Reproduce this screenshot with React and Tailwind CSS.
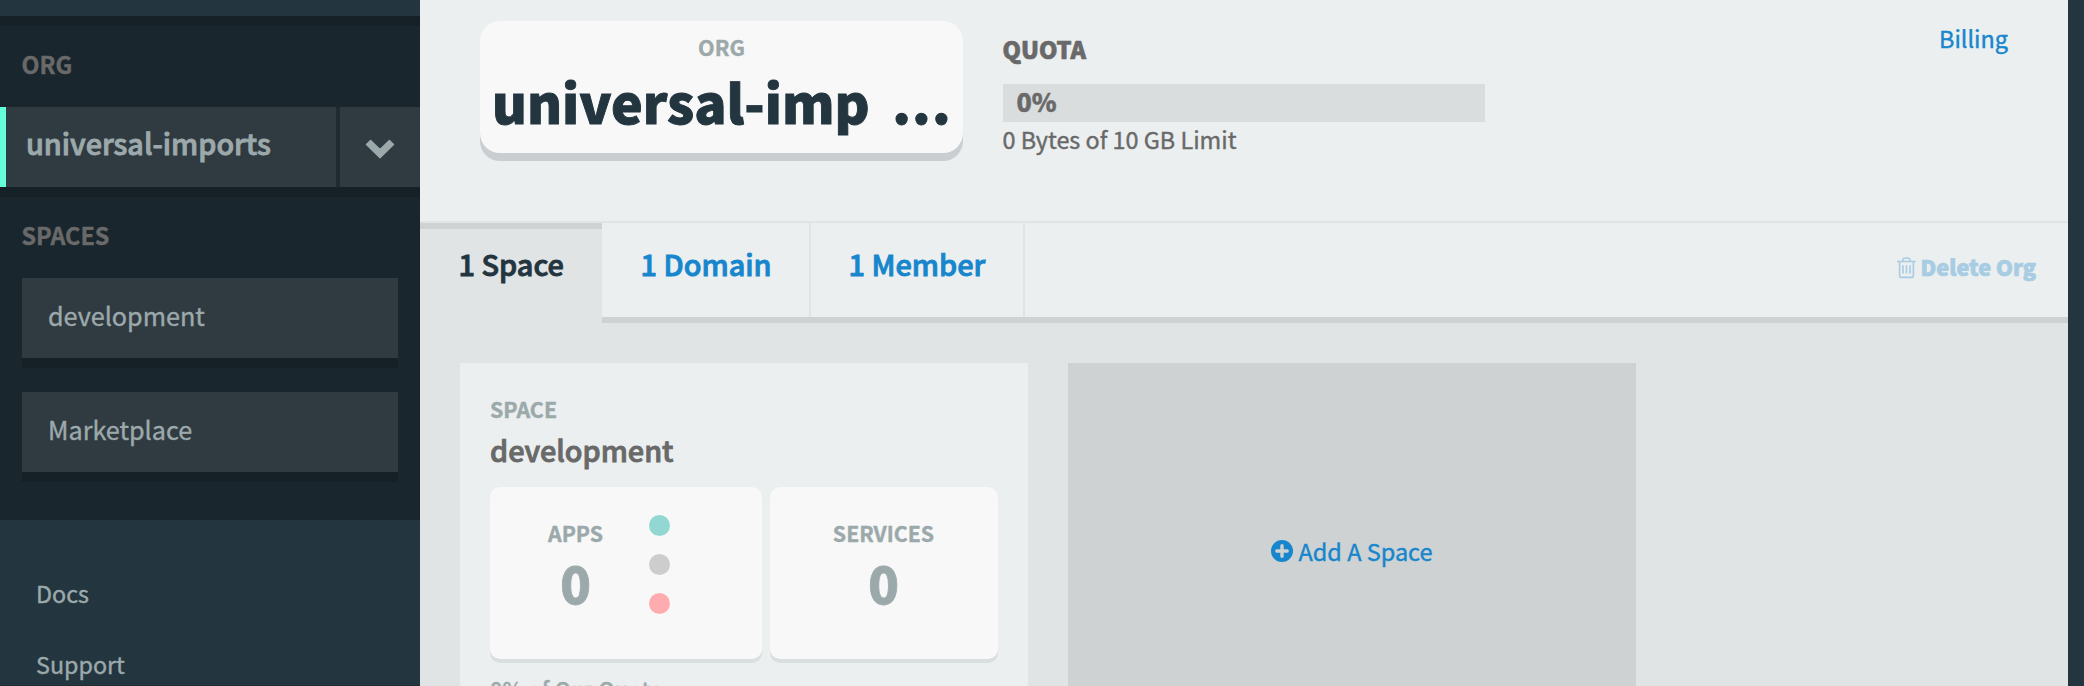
import React from 'react';

function ChevronDown() {
  return (
    <svg width="30" height="20" viewBox="0 0 30 20" fill="#9ca9ab" stroke="#9ca9ab" strokeWidth="1.4" strokeLinejoin="round">
      <path d="M1.5 5.5 5.6 1.4 15 10.6 24.4 1.4 28.5 5.5 15 18.7Z" />
    </svg>
  );
}

function Trash() {
  return (
    <svg width="19" height="22" viewBox="0 0 19 22" fill="none" stroke="#a7cce3" strokeWidth="1.6">
      <path d="M0 4.5H18.8M5.8 4.2V2.8Q6 1 7.8 1H11Q12.8 1 13 2.8V4.2" />
      <path d="M2.6 4.5V19Q2.6 20.4 4 20.4H15Q16.4 20.4 16.4 19V4.5" />
      <path d="M6 8.3V16.6M9.5 8.3V16.6M13 8.3V16.6" />
    </svg>
  );
}

function PlusCircle() {
  return (
    <svg width="22" height="22" viewBox="0 0 22 22">
      <circle cx="11" cy="11" r="11" fill="#1786cd" />
      <path d="M11 5.8V16.2M5.8 11H16.2" stroke="#ced2d3" strokeWidth="3.4" strokeLinecap="round" />
    </svg>
  );
}

function NavBox({ children }) {
  return (
    <a className="block h-20 bg-[#303a41] pl-[26px] leading-[74px] text-[#9ca9ab] shadow-[0_10px_0_#162127]">{children}</a>
  );
}

function Sidebar() {
  return (
    <aside className="flex h-full w-[420px] shrink-0 flex-col bg-[#23353f] pt-4 text-[#9ca9ab]">
      <div className="h-[504px] shrink-0 bg-[#19262d]">
        <div className="h-2.5 bg-[#162127]" />
        <div className="mt-[22px] pl-[21.5px] text-[23.4px] leading-8 font-bold text-[#696969]">ORG</div>
        <div className="mt-[27px] flex h-20 shadow-[0_10px_0_#162127]">
          <div className="w-[336px] border-l-6 border-[#64ffda] bg-[#303a41] pl-5 text-[28.8px] leading-[72px] font-medium [-webkit-text-stroke:0.9px]">universal-imports</div>
          <div className="w-1 bg-[#212a2e]" />
          <div className="flex w-20 justify-center bg-[#303a41] pt-8">
            <ChevronDown />
          </div>
        </div>
        <div className="mt-8 pl-[21.5px] text-[23.4px] leading-8 font-bold text-[#696969]">SPACES</div>
        <div className="mt-[27px] flex flex-col gap-[34px] px-[22px] text-[25.2px]">
          <NavBox>development</NavBox>
          <NavBox>Marketplace</NavBox>
        </div>
      </div>
      <nav className="flex flex-1 flex-col gap-[39px] border-b border-[#1f2d35] pt-[57px] pl-9 text-[23.3px] leading-8">
        <a>Docs</a>
        <a>Support</a>
      </nav>
    </aside>
  );
}

function Header() {
  return (
    <header className="flex h-[221px] shrink-0 items-start pl-[60px]">
      <div className="mt-[21px] h-[132px] w-[483px] rounded-[20px] bg-[#f8f8f8] pt-3 text-center shadow-[0_8px_0_#caced0]">
        <div className="text-[21.6px] leading-7 font-bold text-[#9ca9ab]">ORG</div>
        <div className="mt-2.5 flex justify-between pr-[11px] pl-3 text-[53.4px] leading-[60px] font-black text-[#23353f] [-webkit-text-stroke:0.9px]">
          <span>universal-imp</span>
          <span className="tracking-[1.2px]">...</span>
        </div>
      </div>
      <div className="mt-[33px] ml-10 w-[482px] text-[#696969]">
        <div className="-ml-[0.5px] text-[23.5px] leading-8 font-black [-webkit-text-stroke:0.7px]">QUOTA</div>
        <div className="mt-[19px] h-[38px] bg-[#dadddd] pl-[13.5px] text-[25.2px] leading-[35px] font-black">0%</div>
        <div className="mt-px -ml-[0.5px] text-[23.4px] leading-8">0 Bytes of 10 GB Limit</div>
      </div>
      <a className="mt-[22px] mr-[60px] ml-auto text-[23.4px] leading-8 text-[#1786cd]">Billing</a>
    </header>
  );
}

function Tabs() {
  return (
    <div className="flex h-[102px] shrink-0 border-t-2 border-[#e0e4e4] text-[28.9px] leading-8 font-medium [-webkit-text-stroke:0.9px]">
      <div className="w-[182px] border-t-6 border-[#ced2d3] bg-[#e0e4e4] pt-[18px] pl-[38.5px] text-[#23353f]">1 Space</div>
      <div className="flex flex-1 border-b-6 border-[#ced2d3] text-[#1786cd]">
        <div className="w-[209px] border-r-2 border-[#e0e4e4] pt-6 pl-[38.5px]">1 Domain</div>
        <div className="w-[214px] border-r-2 border-[#e0e4e4] pt-6 pl-[37.5px]">1 Member</div>
        <div className="mt-7 mr-8 ml-auto flex gap-[5px] text-[21.6px] font-black text-[#a7cce3] [-webkit-text-stroke:0.7px]">
          <span className="pt-1.5"><Trash /></span>
          <span>Delete Org</span>
        </div>
      </div>
    </div>
  );
}

function Count({ label }) {
  return (
    <div className="text-center">
      <div className="text-[21.3px] leading-7 font-bold">{label}</div>
      <div className="mt-2.5 text-[50.4px] leading-[52px] font-black [-webkit-text-stroke:0.8px]">0</div>
    </div>
  );
}

function SpaceCard() {
  return (
    <section className="h-[500px] w-[568px] bg-[#ebefef] px-[30px] pt-8 text-[#9ca9ab]">
      <div className="text-[21.4px] leading-7 font-bold">SPACE</div>
      <div className="mt-[11px] text-[28.8px] leading-8 font-medium text-[#696969] [-webkit-text-stroke:0.9px]">development</div>
      <div className="mt-[21px] flex h-[172px] gap-2">
        <div className="flex w-[272px] rounded-[10px] bg-[#f8f8f8] pt-8 pl-[58px] shadow-[0_4px_0_#d9dedf]">
          <Count label="APPS" />
          <div className="-mt-1 ml-[46px] flex flex-col gap-[18px]">
            <div className="size-[21px] rounded-full bg-[#92d7d2]" />
            <div className="size-[21px] rounded-full bg-[#cdcdcd]" />
            <div className="size-[21px] rounded-full bg-[#ffacb1]" />
          </div>
        </div>
        <div className="flex w-[228px] justify-center rounded-[10px] bg-[#f8f8f8] pt-8 pr-px shadow-[0_4px_0_#d9dedf]">
          <Count label="SERVICES" />
        </div>
      </div>
      <div className="mt-4 text-[21.6px] leading-7 font-medium tracking-[0.3px]">0% of Org Quota</div>
    </section>
  );
}

export default function App() {
  return (
    <div className="flex h-[686px] w-[2084px] overflow-hidden bg-[#23353f] font-['Noto_Sans_CJK_SC','Noto_Sans',sans-serif] whitespace-nowrap [-webkit-text-stroke:0.4px]">
      <Sidebar />
      <main className="flex w-[1648px] shrink-0 flex-col bg-[#ebefef]">
        <Header />
        <Tabs />
        <div className="flex flex-1 gap-10 overflow-hidden bg-[#e0e4e4] pt-10 pl-10">
          <SpaceCard />
          <section className="flex h-[500px] w-[568px] justify-center gap-[5px] bg-[#ced2d3] pt-[172px] text-[23.5px] leading-8 text-[#1786cd]">
            <span className="pt-[5px]"><PlusCircle /></span>
            <span>Add A Space</span>
          </section>
        </div>
      </main>
    </div>
  );
}
